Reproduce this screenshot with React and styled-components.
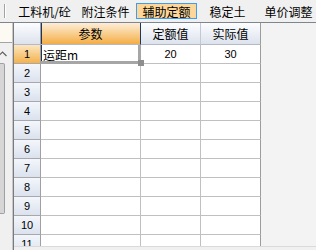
import React from 'react';
import styled, { createGlobalStyle, css } from 'styled-components';

const CJK = `"Noto Sans CJK SC", "Noto Sans", sans-serif`;
const NUM = `"Liberation Sans", Arial, sans-serif`;

const GlobalStyle = createGlobalStyle`
  html, body { margin: 0; padding: 0; background: #f0f0f0; overflow: hidden; }
  #root { width: 316px; height: 250px; }
`;

const Window = styled.div`
  width: 316px;
  height: 250px;
  display: flex;
  flex-direction: column;
  background: #f0f0f0;
  overflow: hidden;
`;

const TabBar = styled.div`
  height: 22px;
  flex: none;
  display: flex;
  align-items: center;
  border-bottom: 1px solid #7f858f;
`;

const GripArea = styled.div`
  width: 14px;
  height: 22px;
  flex: none;
  display: flex;
  align-items: center;
  padding-left: 4px;
  box-sizing: border-box;
`;

const Grip = styled.div`
  width: 1px;
  height: 14px;
  background: #a2a2a2;
  border-right: 1px solid #ffffff;
`;

const Tab = styled.div`
  width: 61px;
  height: 16px;
  flex: none;
  box-sizing: border-box;
  display: flex;
  align-items: center;
  justify-content: center;
  font-family: ${CJK};
  font-size: 12px;
  color: #000;
  border: 1px solid transparent;
  white-space: nowrap;
  ${(p) =>
    p.$active &&
    css`
      background: #fdd699;
      border-color: #3d9cf4;
    `}
`;

const Main = styled.div`
  flex: 1;
  display: flex;
  min-height: 0;
`;

const LeftPanel = styled.div`
  width: 13px;
  flex: none;
  display: flex;
  flex-direction: column;
  border-right: 1px solid #c8c8c8;
  box-sizing: border-box;
`;

const LeftTop = styled.div`
  height: 19px;
  flex: none;
  background: #fdfaf3;
  border-bottom: 1px solid #a4a4a4;
`;

const ScrollTrack = styled.div`
  flex: 1;
  display: flex;
  flex-direction: column;
  overflow: hidden;
  background: #f0f0f0;
`;

const ArrowBox = styled.div`
  height: 20px;
  flex: none;
  display: flex;
  align-items: center;
  margin-left: -2px;
  padding-top: 2px;
  box-sizing: border-box;
`;

const Thumb = styled.div`
  width: 5px;
  height: 151px;
  flex: none;
  box-sizing: border-box;
  background: #d6d6d6;
  border: 1px solid #a0a0a0;
  border-left: none;
  border-radius: 0 2px 2px 0;
`;

const GridPanel = styled.div`
  flex: 1;
  display: flex;
  flex-direction: column;
  border-left: 1px solid #7a7a7a;
  min-width: 0;
`;

const GridView = styled.div`
  height: 223px;
  flex: none;
  overflow: hidden;
  background: #f3f3f3;
`;

const Grid = styled.div`
  display: grid;
  grid-template-columns: 27px 100px 60px 60px;
  grid-auto-rows: 19px;
  grid-template-rows: 22px;
  width: 247px;
`;

const headerBg = 'linear-gradient(#fcfdfe, #dce2ed)';
const activeBg = 'linear-gradient(#fdeed8, #f4ae45)';

const Corner = styled.div`
  box-sizing: border-box;
  background: ${headerBg};
  border-right: 1px solid #a0a0a0;
  border-bottom: 1px solid #b4bac5;
`;

const HeadCell = styled.div`
  box-sizing: border-box;
  display: flex;
  align-items: center;
  justify-content: center;
  font-family: ${CJK};
  font-size: 12px;
  color: #000;
  background: ${(p) => (p.$active ? activeBg : headerBg)};
  border-right: 1px solid ${(p) => (p.$last ? '#9c9c9c' : p.$active ? '#1f3560' : '#c3c8d2')};
  border-bottom: 1px solid #b4bac5;
  ${(p) =>
    p.$active &&
    css`
      box-shadow: inset 1px 0 0 #1f3560;
    `}
`;

const RowHead = styled.div`
  box-sizing: border-box;
  display: flex;
  align-items: center;
  justify-content: center;
  font-family: ${NUM};
  font-size: 11px;
  color: #000;
  background: ${(p) => (p.$active ? 'linear-gradient(#fce6c2, #f4b24d)' : 'linear-gradient(#f3f6fb, #dbe2ee)')};
  border-right: 1px solid #a0a0a0;
  border-bottom: 1px solid #a8a8a8;
`;

const Cell = styled.div`
  box-sizing: border-box;
  display: flex;
  align-items: center;
  justify-content: ${(p) => (p.$align === 'left' ? 'flex-start' : 'center')};
  padding-left: ${(p) => (p.$align === 'left' ? '2px' : '0')};
  font-family: ${(p) => (p.$align === 'left' ? CJK : NUM)};
  font-size: ${(p) => (p.$align === 'left' ? '12px' : '11px')};
  color: #000;
  background: #ffffff;
  border-right: 1px solid ${(p) => (p.$last ? '#9c9c9c' : '#c0c0c0')};
  border-bottom: 1px solid #c0c0c0;
  white-space: nowrap;
  ${(p) =>
    p.$selected &&
    css`
      position: relative;
      z-index: 2;
      box-shadow: inset 1px 0 0 #1f3560;
      &::after {
        content: '';
        position: absolute;
        left: 0;
        top: 0;
        right: -1px;
        bottom: -1px;
        border-right: 3px solid #a6a6a6;
        border-bottom: 3px solid #a6a6a6;
        pointer-events: none;
      }
      &::before {
        content: '';
        position: absolute;
        width: 6px;
        height: 6px;
        right: -4px;
        bottom: -3px;
        background: #8e8e8e;
        z-index: 1;
      }
    `}
`;

const BottomStrip = styled.div`
  flex: 1;
  border-top: 1px solid #dadada;
  background: #f0f0f0;
`;

const tabs = ['工料机/砼', '附注条件', '辅助定额', '稳定土', '单价调整'];
const columns = ['参数', '定额值', '实际值'];
const rows = [
  ['运距m', '20', '30'],
  ...Array.from({ length: 11 }, () => ['', '', '']),
];

export default function App() {
  return (
    <>
      <GlobalStyle />
      <Window>
        <TabBar>
          <GripArea>
            <Grip />
          </GripArea>
          {tabs.map((t) => (
            <Tab key={t} $active={t === '辅助定额'}>
              {t}
            </Tab>
          ))}
        </TabBar>
        <Main>
          <LeftPanel>
            <LeftTop />
            <ScrollTrack>
              <ArrowBox>
                <svg width="9" height="6" viewBox="0 0 9 6">
                  <polyline points="0.5,5 4.5,1 8.5,5" fill="none" stroke="#606060" strokeWidth="1.2" />
                </svg>
              </ArrowBox>
              <Thumb />
            </ScrollTrack>
          </LeftPanel>
          <GridPanel>
            <GridView>
              <Grid>
                <Corner />
                {columns.map((c, i) => (
                  <HeadCell key={c} $active={i === 0} $last={i === columns.length - 1}>
                    {c}
                  </HeadCell>
                ))}
                {rows.map((r, ri) => (
                  <React.Fragment key={ri}>
                    <RowHead $active={ri === 0}>{ri + 1}</RowHead>
                    <Cell $align="left" $selected={ri === 0}>
                      {r[0]}
                    </Cell>
                    <Cell>{r[1]}</Cell>
                    <Cell $last>{r[2]}</Cell>
                  </React.Fragment>
                ))}
              </Grid>
            </GridView>
            <BottomStrip />
          </GridPanel>
        </Main>
      </Window>
    </>
  );
}
